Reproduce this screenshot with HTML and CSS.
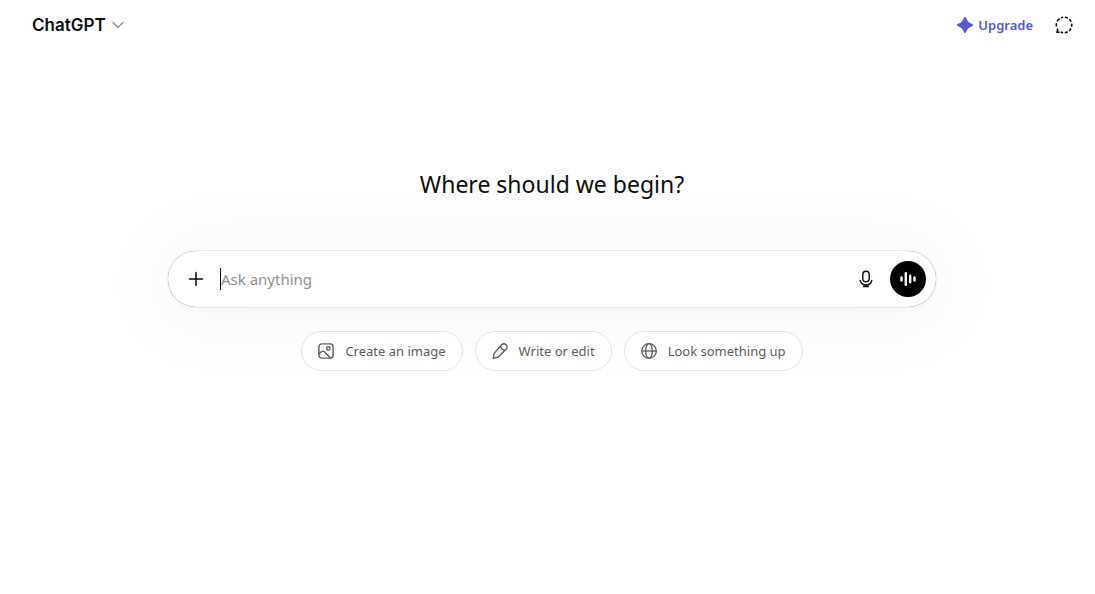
FILE: index.html
```html
<!DOCTYPE html>
<html lang="en">
  <head>
    <meta charset="UTF-8" />
    <meta name="viewport" content="width=device-width, initial-scale=1.0" />
    <title>ChatGPT</title>
    <link rel="stylesheet" href="styles.css">
  </head>
  <body>
    <header class="topbar">
      <button type="button" class="model-btn">
        <span>ChatGPT</span>
        <svg width="12" height="12" viewBox="0 0 12 12" fill="none" stroke="#8f8f8f" stroke-width="1.400" stroke-linecap="round" stroke-linejoin="round">
          <path d="M1 3.500l5 4.800 5-4.800" />
        </svg>
      </button>
      <div class="topbar-right">
        <button type="button" class="upgrade-btn">
          <svg width="16" height="16" viewBox="0 0 16 16" fill="currentColor">
            <path d="M8 0c.6 0 1 .4 1.200 1 1 3.100 2.700 4.800 5.800 5.800.6.200 1 .6 1 1.200s-.4 1-1 1.200c-3.100 1-4.800 2.700-5.800 5.800-.2.600-.6 1-1.200 1s-1-.4-1.200-1C5.800 11.900 4.100 10.200 1 9.200.4 9 0 8.600 0 8s.4-1 1-1.200C4.100 5.800 5.800 4.100 6.800 1 7 .4 7.400 0 8 0z" />
          </svg>
          <span>Upgrade</span>
        </button>
        <button type="button" class="icon-btn" aria-label="Temporary chat">
          <svg width="18" height="18" viewBox="0 0 18 18" fill="none" stroke="#0d0d0d" stroke-width="1.600" stroke-linejoin="round">
            <path d="M6.100 1.900a7.600 7.600 0 0 1 2-.6M9.900 1.300a7.600 7.600 0 0 1 2.900.9M14.200 3.200a7.600 7.600 0 0 1 1.900 2.600M16.600 7.700a7.600 7.600 0 0 1 0 2.900M16 12.300a7.600 7.600 0 0 1-1.900 2.500M12.700 15.800a7.600 7.600 0 0 1-2.900.9M8.100 16.700a7.600 7.600 0 0 1-2.500-.7M4.600 2.700a7.600 7.600 0 0 0-2.500 2.800M1.500 7.300a7.600 7.600 0 0 0-.1 3.100M2.100 12.600l.7 1.400-.9 2.300h2.600" />
          </svg>
        </button>
      </div>
    </header>

    <main class="main">
      <h1 class="title">Where should we begin?</h1>

      <form class="composer">
        <button type="button" class="icon-btn" aria-label="Add files">
          <svg width="20" height="20" viewBox="0 0 20 20" fill="none" stroke="#0d0d0d" stroke-width="1.500" stroke-linecap="round">
            <path d="M10 3.500v13M3.500 10h13" />
          </svg>
        </button>
        <input type="text" class="prompt" placeholder="Ask anything" aria-label="Ask anything" />
        <button type="button" class="icon-btn" aria-label="Dictate">
          <svg width="20" height="20" viewBox="0 0 20 20" fill="none" stroke="#0d0d0d" stroke-width="1.400" stroke-linecap="round">
            <rect x="6.800" y="2.300" width="6.400" height="10.400" rx="3.200" />
            <path d="M4.200 11.500a6 6 0 0 0 11.600 0M10 15.800v1.700M7.500 17.500h5" />
          </svg>
        </button>
        <button type="button" class="voice-btn" aria-label="Use voice mode">
          <svg width="20" height="20" viewBox="0 0 20 20" fill="none" stroke="#fff" stroke-width="2.400" stroke-linecap="round">
            <path d="M3.500 8.500v3M7.800 4.300v11.400M12.200 6.700v6.600M16.500 8.500v3" />
          </svg>
        </button>
      </form>

      <div class="chips">
        <button type="button" class="chip">
          <svg width="16" height="16" viewBox="0 0 16 16" fill="none" stroke="currentColor" stroke-width="1.400" stroke-linecap="round" stroke-linejoin="round">
            <rect x=".9" y=".9" width="14.200" height="14.200" rx="3" />
            <circle cx="10.300" cy="5.500" r="1.700" />
            <path d="M1.200 10.600l2.200-1.800c1-.8 2.300-.8 3.200.1l5.600 5.800" />
          </svg>
          <span>Create an image</span>
        </button>
        <button type="button" class="chip">
          <svg width="16" height="16" viewBox="0 0 16 16" fill="none" stroke="currentColor" stroke-width="1.400" stroke-linecap="round" stroke-linejoin="round">
            <path d="M9.600 1.800c1.300-1.300 3.200-1.300 4.500 0s1.300 3.200 0 4.500l-7.300 7.300c-.4.400-.9.700-1.500.8l-4.100.8.800-4.100c.1-.6.400-1.100.8-1.500zM8.500 2.900c.4 2.500 2 4.100 4.500 4.500" />
          </svg>
          <span>Write or edit</span>
        </button>
        <button type="button" class="chip">
          <svg width="16" height="16" viewBox="0 0 16 16" fill="none" stroke="currentColor" stroke-width="1.300">
            <circle cx="8" cy="8" r="7.300" />
            <ellipse cx="8" cy="8" rx="3.300" ry="7.300" />
            <path d="M.7 8h14.600" />
          </svg>
          <span>Look something up</span>
        </button>
      </div>
    </main>
  </body>
</html>
```
FILE: styles.css
```css
* {
  box-sizing: border-box;
  margin: 0;
  padding: 0;
}

body {
  min-height: 100vh;
  background-color: #fff;
  color: #0d0d0d;
  font-family: "Segoe UI", "Noto Sans", sans-serif;
}

button {
  display: flex;
  align-items: center;
  border: none;
  background: none;
  color: inherit;
  font-family: inherit;
  cursor: pointer;
}

svg {
  flex-shrink: 0;
}

.topbar {
  display: flex;
  justify-content: space-between;
  align-items: center;
  height: 50px;
  padding: 0 13px 0 32px;
}

.topbar-right {
  display: flex;
  align-items: center;
  gap: 13px;
}

.model-btn {
  gap: 6px;
  font-family: Inter, sans-serif;
  font-size: 17px;
  font-weight: 600;
}

.upgrade-btn {
  gap: 5px;
  color: #5856d6;
  font-size: 13px;
  font-weight: 600;
}

.icon-btn {
  justify-content: center;
  width: 36px;
  height: 36px;
  border-radius: 50%;
}

.main {
  display: flex;
  flex-direction: column;
  align-items: center;
  padding: 118px 16px 0 25px;
}

.title {
  margin-bottom: 50px;
  font-size: 23px;
  font-weight: 400;
  line-height: 33px;
}

.composer {
  display: flex;
  align-items: center;
  width: 100%;
  max-width: 768px;
  height: 56px;
  padding: 0 10px;
  border-radius: 28px;
  background-color: #fff;
  box-shadow: 0 4px 80px 14px rgba(0, 0, 0, 0.04), 0 4px 4px rgba(0, 0, 0, 0.02), 0 0 1px rgba(0, 0, 0, 0.62);
}

.prompt {
  flex: 1;
  min-width: 0;
  height: 22px;
  margin: 0 6px;
  border: none;
  border-left: 1px solid #0d0d0d;
  outline: none;
  background: none;
  color: #0d0d0d;
  font-family: inherit;
  font-size: 15px;
}

.prompt::placeholder {
  color: #8f8f8f;
  opacity: 1;
}

.voice-btn {
  justify-content: center;
  width: 36px;
  height: 36px;
  margin-left: 6px;
  border-radius: 50%;
  background-color: #000;
}

.chips {
  display: flex;
  flex-wrap: wrap;
  justify-content: center;
  gap: 12px;
  margin-top: 24px;
}

.chip {
  gap: 11px;
  height: 40px;
  padding: 0 16px;
  border: 1px solid #e3e3e3;
  border-radius: 20px;
  background-color: #fff;
  color: #5d5d5d;
  font-size: 13px;
}
```
